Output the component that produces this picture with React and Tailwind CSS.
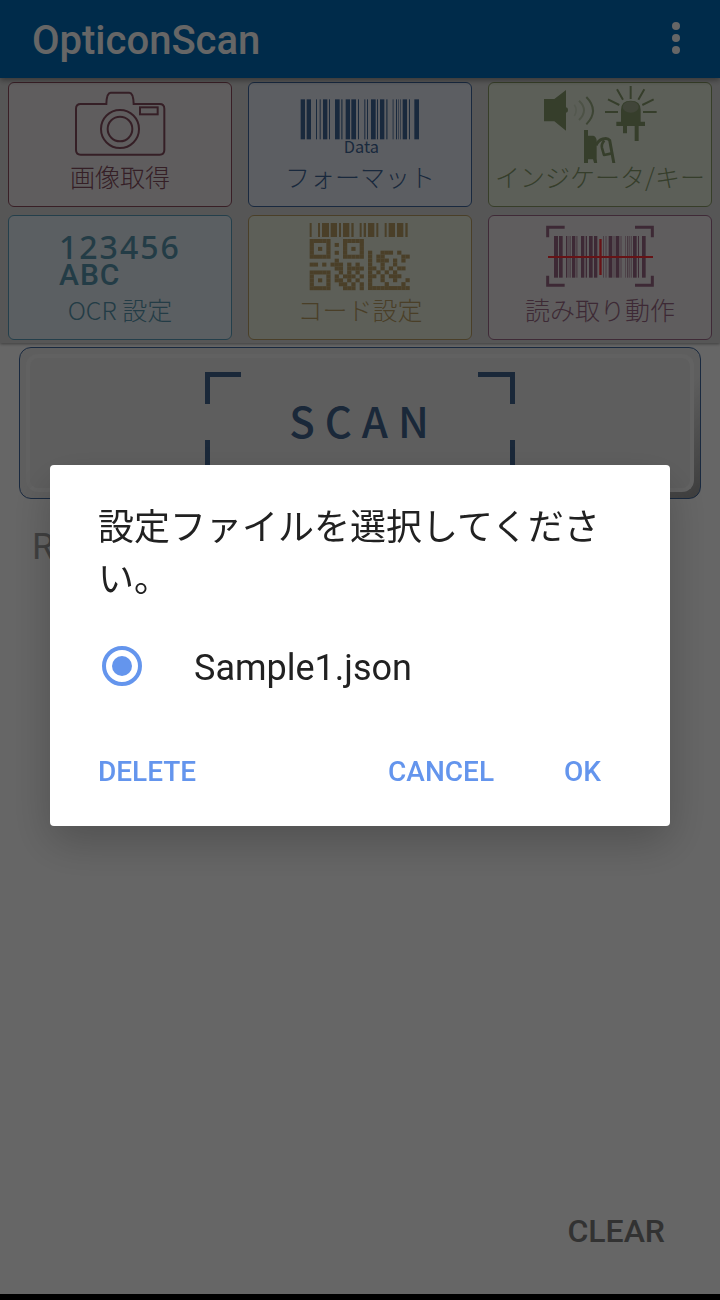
import React from "react";

const JP = "font-['Noto_Sans_CJK_JP','Noto_Sans',sans-serif]";

function Bars({ list, y, h }) {
  return list.map(([x, w, o]) => (
    <rect key={x} x={x} y={y} width={w} height={h} opacity={o || 1} />
  ));
}

function Cells({ rows, x, y }) {
  return rows.flatMap((row, r) =>
    row.split("").map((c, i) =>
      c === "#" ? (
        <rect key={r + "-" + i} x={x + i * 12.5} y={y + r * 11.8} width="12.7" height="12" />
      ) : null
    )
  );
}

function CameraIcon() {
  return (
    <svg viewBox="27 39 666 240" className="block h-20 w-full" fill="none" stroke="currentColor" strokeWidth="6" aria-hidden="true">
      <path d="M242 102H319Q320 68 332 68H388Q400 68 401 102H479Q493 102 493 116V240Q493 254 479 254H242Q228 254 228 240V116Q228 102 242 102Z" />
      <circle cx="360" cy="177" r="57" />
      <circle cx="360" cy="177" r="37" />
      <rect x="420" y="112" width="53" height="21" />
    </svg>
  );
}

const FORMAT_BARS = [
  [182, 13], [200, 13], [228, 3], [239, 3], [249, 13], [267, 3], [285, 14], [303, 5, 0.7], [317, 13],
  [334, 14], [354, 3], [373, 3], [381, 3], [393, 14], [411, 3], [420, 13], [438, 5, 0.7], [457, 5, 0.5],
  [468, 3], [474, 3, 0.6], [480, 3, 0.6], [488, 13], [507, 3], [523, 14],
];

function FormatIcon() {
  return (
    <svg viewBox="27 39 666 240" className="block h-20 w-full" fill="currentColor" aria-hidden="true">
      <Bars list={FORMAT_BARS} y={88} h={120} />
      <text x="364" y="250" fontSize="49" textAnchor="middle" fontFamily="Noto Sans CJK JP, sans-serif">Data</text>
    </svg>
  );
}

function IndicatorIcon() {
  return (
    <svg viewBox="27 39 666 240" className="block h-20 w-full" fill="currentColor" aria-hidden="true">
      <path d="M192 87H223L258 60V182L223 154H192Z" />
      <ellipse cx="258" cy="120" rx="6" ry="8" />
      <g fill="none" stroke="currentColor">
        <path d="M283 104Q294 120 283 138" strokeWidth="5" opacity="0.2" />
        <path d="M297 92Q327 120 297 150" strokeWidth="6" opacity="0.4" />
        <path d="M319 81Q359 122 319 163" strokeWidth="6" opacity="0.8" />
        <path d="M452 48V87M411 58L429 89M493 58L475 89M384 88L418 105M521 88L487 105M375 126H414M489 126H530" strokeWidth="6" />
      </g>
      <path d="M423 158V120Q423 92 452 92Q482 92 482 120V158Z" />
      <ellipse cx="452" cy="111" rx="24" ry="17" fill="#a2ac8e" />
      <path d="M409 155H495V168H476V213H464V168H441V190H429V168H409Z" />
      <path d="M312 180H324V197H340Q348 199 350 210V266L352 282H343L339 268H324V282H312Z" />
      <g fill="none" stroke="currentColor" strokeLinejoin="round">
        <path d="M348 226C356 206 381 200 389 211L402 282" strokeWidth="9" />
        <path d="M373 212Q363 222 366 234L372 255L396 250" strokeWidth="8" />
      </g>
    </svg>
  );
}

function OcrIcon() {
  return (
    <div className="flex h-20 w-full flex-col pt-[18px] pl-[50px] text-left" aria-hidden="true">
      <span className="font-['Noto_Sans',sans-serif] text-[32px] leading-[26px] font-medium tracking-[2px]">123456</span>
      <span className="text-[30px] leading-[30px] font-medium tracking-[1px]">ABC</span>
    </div>
  );
}

const CODE_BARS = [
  [209, 6], [234, 6], [246, 21], [272, 19], [297, 6], [309, 19], [334, 7], [359, 6], [371, 7],
  [384, 19], [409, 6], [434, 6], [446, 19], [471, 19], [496, 7],
];
const QR_ROWS = [
  "#####...#####",
  "#...#.#.#...#",
  "#.#.#...#.#.#",
  "#...#.#.#...#",
  "#####...#####",
  "......#......",
  "##.#.###.#.#.",
  "......##.####",
  "#####..#.#.#.",
  "#...#.#.###.#",
  "#.#.#.##.#.#.",
  "#...#..##.#.#",
  "#####...###.#",
];
const DM_ROWS = [
  "#..###.#..",
  "#.##....##",
  "#.###.#.#.",
  "#..#..#...",
  "##.#.#.##.",
  "#.#.#.#...",
  "##.#.###..",
  "#..#..#..#",
  "#...#...#.",
  "##########",
];

function CodeIcon() {
  return (
    <svg viewBox="27 24 666 240" className="block h-20 w-full" fill="currentColor" aria-hidden="true">
      <Bars list={CODE_BARS} y={45} h={42} />
      <Cells rows={QR_ROWS} x={209} y={93} />
      <Cells rows={DM_ROWS} x={384} y={128} />
    </svg>
  );
}

const READ_BARS = [
  [222, 12], [237, 11], [258, 4], [264, 2, 0.5], [268, 5, 0.5], [276, 10], [288, 5, 0.5], [303, 10],
  [317, 4], [327, 11], [342, 10], [369, 3, 0.6], [376, 4, 0.5], [386, 11], [400, 4, 0.5], [407, 11],
  [421, 4, 0.5], [435, 3, 0.5], [441, 4, 0.7], [447, 4, 0.5], [453, 3, 0.5], [459, 11], [474, 3], [486, 11],
];

function ReadIcon() {
  return (
    <svg viewBox="27 24 666 240" className="block h-20 w-full" fill="currentColor" aria-hidden="true">
      <path d="M254 58H203V88M465 58H517V88M254 232H203V203M465 232H517V203" fill="none" stroke="currentColor" strokeWidth="9" />
      <Bars list={READ_BARS} y={84} h={125} />
      <g fill="#ff3038">
        <rect x="204" y="144" width="315" height="6" />
        <rect x="358" y="93" width="7" height="108" />
      </g>
    </svg>
  );
}

const TILES = [
  { label: "画像取得", Icon: CameraIcon, tone: "bg-[#eee8eb] border-[#8f4e60] text-[#854e5f]" },
  { label: "フォーマット", Icon: FormatIcon, tone: "bg-[#e6ebf5] border-[#3f679e] text-[#3f6698]" },
  { label: "インジケータ/キー", Icon: IndicatorIcon, tone: "bg-[#e6eedc] border-[#8a9b66] text-[#879b6c]" },
  { label: "OCR 設定", Icon: OcrIcon, tone: "bg-[#e3edf4] border-[#5a9dbb] text-[#5796ae]" },
  { label: "コード設定", Icon: CodeIcon, tone: "bg-[#e8eedc] border-[#b99d64] text-[#b99d64]" },
  { label: "読み取り動作", Icon: ReadIcon, tone: "bg-[#eee8eb] border-[#9d698a] text-[#986884]" },
];

function Tile({ label, Icon, tone }) {
  return (
    <button type="button" className={`flex flex-col items-center rounded-md border pb-4 ${tone}`}>
      <Icon />
      <span className={`${JP} text-[25px] leading-[27px] font-light whitespace-nowrap`}>{label}</span>
    </button>
  );
}

function ScanButton() {
  return (
    <button
      type="button"
      className="relative flex h-[152px] items-center justify-center rounded-xl border border-[#3f679e] bg-linear-135 from-[#ececec] from-85% to-[#9a9a9a] pb-1.5"
    >
      <span className="absolute inset-1.5 rounded-xl border-4 border-t-[#f2f2f2] border-r-[#f6f6f6] border-b-[#f6f6f6] border-l-[#f2f2f2] bg-[#ececec]" />
      <svg viewBox="0 0 310 102" className="absolute top-6 h-[102px] w-[310px]" fill="none" stroke="#41648f" strokeWidth="5" aria-hidden="true">
        <path d="M36 2.5H2.5V32M273 2.5H307.500V32M36 99.500H2.5V68M273 99.500H307.500V68" />
      </svg>
      <span className={`${JP} relative pl-2 text-[42px] leading-[48px] font-medium tracking-[10px] text-[#41648f]`}>SCAN</span>
    </button>
  );
}

function SettingsDialog() {
  const action = "h-18 text-[28px] font-medium text-[#6495ed]";
  return (
    <div className="fixed inset-0 flex items-center justify-center bg-black/60 px-[50px] pb-[9px]">
      <div
        role="dialog"
        aria-modal="true"
        aria-labelledby="dialog-title"
        className="w-full rounded-sm bg-white px-12 pt-[33px] pb-[18px] text-[#212121] shadow-[0_16px_44px_rgba(0,0,0,0.22)]"
      >
        <h2 id="dialog-title" className={`${JP} text-[36px] leading-[52px] font-normal`}>
          設定ファイルを選択してください。
        </h2>
        <label className="mt-4 flex h-24 items-center pl-1 text-[36px]">
          <input
            type="radio"
            name="settings-file"
            defaultChecked
            className="mr-[52px] grid h-10 w-10 shrink-0 appearance-none place-content-center rounded-full border-4 border-[#6495ed] before:h-5 before:w-5 before:rounded-full before:bg-[#6495ed] before:content-['']"
          />
          <span className="pt-1">Sample1.json</span>
        </label>
        <div className="mt-[22px] flex items-center">
          <button type="button" className={`${action} mr-auto`}>DELETE</button>
          <button type="button" className={action}>CANCEL</button>
          <button type="button" className={`${action} mr-[21px] ml-[70px]`}>OK</button>
        </div>
      </div>
    </div>
  );
}

export default function App() {
  return (
    <div className="flex min-h-screen flex-col bg-white font-['Roboto',sans-serif]">
      <header className="z-0 flex h-[78px] items-center justify-between bg-[#006bb8] pr-6 pb-0.5 pl-8 text-white shadow-[0_2px_6px_rgba(0,0,0,0.4)]">
        <h1 className="pt-1.5 text-[40px] leading-[48px] font-medium">OpticonScan</h1>
        <button type="button" aria-label="More options" className="flex h-12 w-10 items-center justify-center">
          <svg viewBox="0 0 8 32" className="h-8 w-2" fill="currentColor" aria-hidden="true">
            <circle cx="4" cy="4" r="4" />
            <circle cx="4" cy="16" r="4" />
            <circle cx="4" cy="28" r="4" />
          </svg>
        </button>
      </header>

      <nav className="grid grid-cols-3 gap-x-4 gap-y-2 bg-[#d8d8d8] px-2 pt-1 pb-[3px] shadow-[0_1px_3px_rgba(0,0,0,0.4)]">
        {TILES.map((t) => (
          <Tile key={t.label} {...t} />
        ))}
      </nav>

      <main className="flex flex-1 flex-col px-[19px] pt-1">
        <ScanButton />
        <p className="mt-[26px] pl-[13px] text-[36px] leading-[44px] text-[#a0a0a0]">R</p>
        <button type="button" className="mt-auto mr-9 mb-9 h-[54px] self-end text-[32px] font-medium text-[#7e7e7e]">
          CLEAR
        </button>
      </main>

      <footer className="h-1.5 bg-black" />
      <SettingsDialog />
    </div>
  );
}
